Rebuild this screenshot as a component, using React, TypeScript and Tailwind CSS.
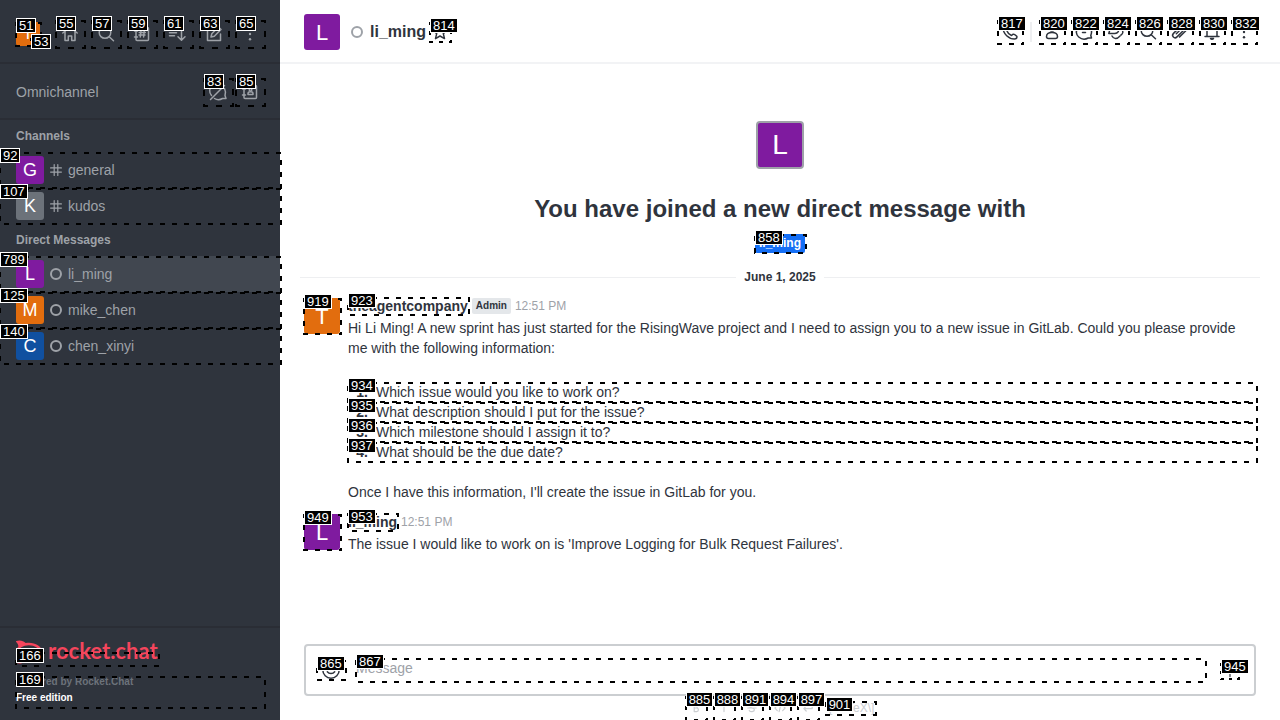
import type { ReactNode } from "react";
import { SiRocketdotchat } from "react-icons/si";

/* Numbered dashed outline laid over an interactive element. */
function Mark({ id, units }: { id: number; units?: number }) {
  return (
    <span aria-hidden="true" className="pointer-events-none absolute -right-px bottom-0 left-0 top-0 z-10">
      <span className="absolute inset-x-0 bottom-0 top-px">
        <svg className="absolute h-full w-full overflow-visible">
          <rect
            width="100%"
            height="100%"
            fill="none"
            stroke="#000"
            strokeWidth="2"
            strokeDasharray="5 7"
            strokeDashoffset={units ? 2.5 : 0}
            pathLength={units}
            shapeRendering="crispEdges"
          />
        </svg>
      </span>
      <span className="absolute -top-1 left-0 h-[15px] border border-white bg-black px-[2px] text-[13px] font-normal leading-[13px] text-white">
        {id}
      </span>
    </span>
  );
}

const shapes: Record<string, ReactNode> = {
  home: <path d="M2.8 9 10 3l7.2 6M5 7.5v9h3.3V12h3.4v4.5H15v-9" />,
  search: <><circle cx="9" cy="8.5" r="5.8" /><path d="m13.2 12.8 4.3 4" /></>,
  directory: <><rect x="4" y="3.5" width="12.5" height="13" rx="1" /><path d="M2.5 7h3M2.5 13h3M9 6.5 8.3 13M12.3 6.5l-.7 6.5M7.3 8.5h6M7 11h6" /></>,
  sort: <path d="M1.5 5.5h9M1.5 8.7h7M1.5 11.7h5M13.5 4v12M10 12.7l3.5 3.5 3.5-3.5" />,
  edit: <path d="M10 3.5H3.5v13h13V10M7 13l.8-3.2L14.5 3 17 5.5l-6.7 6.7L7 13Z" />,
  kebab: <g fill="currentColor" stroke="none"><circle cx="10" cy="4.8" r="1.2" /><circle cx="10" cy="10" r="1.2" /><circle cx="10" cy="15.2" r="1.2" /></g>,
  chatOff: <path d="M3.5 13.5A7 7 0 0 1 14 4M16.5 6.5c1.5 3 .8 6 .5 7l1 3h-3.5c-3 1.8-6.200 1.200-8 0M2.500 17.500l14-14" />,
  contacts: <><rect x="4" y="3.500" width="12.500" height="13" rx="1" /><path d="M2.500 7h3M2.500 13h3M8 12.500h5v-1c0-1-1-1.700-2.500-1.700S8 10.500 8 11.500Z" /><circle cx="10.500" cy="7.700" r="1.300" /></>,
  phone: <path d="M3 5.500C3 12 9 17 14.500 17c1.500 0 2.500-1 2.500-2.200 0-.8-3-3-3.800-2.600l-1.700 1.300C9.500 12.700 7.500 10.500 7 9l1.200-1.700C8.600 6.300 7 3.300 6 3.200 4.500 3 3 4.200 3 5.500Z" />,
  user: <><circle cx="10" cy="6" r="3" /><path d="M4.500 14.500c0-3 2-4 5.500-4s5.500 1 5.500 4c0 1.500-.5 2-2 2h-7c-1.500 0-2-.5-2-2Z" /></>,
  thread: <path d="M16.800 13.500c1.400-3.500.7-6.300-1-8.200C12.500 2 7 2.200 4 5.500c-2.600 3-2 7.200.7 9.500 3 2.600 7 2.400 9.500 1h3.300l-.7-2.500ZM7 7.500h6M8.500 10.500h3" />,
  discussion: <path d="M7.500 11.500H2.800L3.500 9C2 5.500 4.500 3 7.800 3s5.500 2.500 5 5.200c-.5 2.300-2.700 3.600-5.300 3.300ZM15.500 7.500c2 1.500 1.800 4-.5 5.500M6 14c1.500 3 5 3.500 8 0" />,
  clip: <path d="m6.300 11.800 6-6c1.300-1.300 3.200.6 1.900 1.900l-7.200 7.200c-2.500 2.500-6-1-3.500-3.500l7.300-7.300c3.800-3.500 8.300 1.200 4.800 4.800L9.500 15" />,
  bell: <path d="M3 14.500h14M5 14.500V8.500c0-6.500 10-6.500 10 0v6M8.500 16.500c.5 1 2.500 1 3 0Z" />,
  star: <path d="m10 3 2.100 4.700 5 .5-3.800 3.400 1.200 5L10 14l-4.500 2.600 1.200-5L2.900 8.200l5-.5L10 3Z" />,
  smile: <><circle cx="10" cy="10" r="8.200" /><path d="M6.300 11.800c1.800 2.400 5.600 2.400 7.400 0M7.300 7v1.200M12.700 7v1.200" /></>,
  plus: <path d="M10 3v14M3 10h14" />,
  hash: <path d="M7 1v18M13 1v18M1 6.500h18M1 13.500h18" />,
  bold: <path d="M7 4v12h4c4 0 4-6 0-6H7h3c3.500 0 3.500-6 0-6H7Z" />,
  italic: <path d="M10 4v12M8 4h4" />,
  strike: <path d="M14 6c-1-3-8-2.500-8 1s8 2.500 8 6-7 4-8.500 1M3 10h14" />,
  code: <path d="m5.500 5.500-4 4.500 4 4.500M14.500 5.500l4 4.500-4 4.500M11.500 4l-3 12" />,
  enter: <path d="M17 4v7H3M7 7l-4 4 4 4" />,
};

function Icon({ name, className = "size-5", width = 1.5 }: { name: string; className?: string; width?: number }) {
  return (
    <svg aria-hidden="true" viewBox="0 0 20 20" className={`shrink-0 ${className}`} fill="none" stroke="currentColor" strokeWidth={width} strokeLinejoin="round" strokeLinecap="round">
      {shapes[name]}
    </svg>
  );
}

function IconButton({ id, name, label, size = "size-7" }: { id: number; name: string; label: string; size?: string }) {
  return (
    <button type="button" aria-label={label} className={`relative flex shrink-0 items-center justify-center ${size}`}>
      <Icon name={name} />
      <Mark id={id} units={96} />
    </button>
  );
}

function Row({ id, letter, color, icon, name, active }: { id: number; letter: string; color: string; icon: "hash" | "status"; name: string; active?: boolean }) {
  return (
    <a href={`#${name}`} className={`relative flex h-9 items-center px-4 text-sm ${active ? "bg-[#414750]" : ""}`}>
      <span className={`flex size-7 items-center justify-center rounded-[3px] text-lg text-white ${color}`}>{letter}</span>
      <span className="mx-[6px] flex size-3 items-center justify-center">
        {icon === "hash" ? <Icon name="hash" className="size-3" width={2} /> : <span className="size-3 rounded-full border-2 border-[#9ea2a8]" />}
      </span>
      {name}
      <Mark id={id} />
    </a>
  );
}

function Message({ avatarId, nameId, letter, color, name, badge, children }: { avatarId: number; nameId: number; letter: string; color: string; name: string; badge?: string; children: ReactNode }) {
  return (
    <article className="flex gap-2 px-6 pb-[2px] pt-2">
      <button type="button" aria-label={`${name} profile`} className={`relative mt-[2px] flex size-9 shrink-0 items-center justify-center rounded-[3px] text-[22px] text-white ${color}`}>
        {letter}
        <Mark id={avatarId} units={144} />
      </button>
      <div className="min-w-0 flex-1">
        <header className="flex h-5 items-center gap-1">
          <button type="button" className="relative text-sm font-bold leading-[18px]">
            {name}
            <Mark id={nameId} />
          </button>
          {badge && <span className="rounded-[2px] bg-[#e4e7ea] px-1 text-[10px] font-bold leading-4">{badge}</span>}
          <time className="text-xs text-[#9ea2a8]">12:51 PM</time>
        </header>
        <div className="mt-[2px] text-sm leading-5">{children}</div>
      </div>
    </article>
  );
}

const questions = [
  { id: 934, text: "Which issue would you like to work on?" },
  { id: 935, text: "What description should I put for the issue?" },
  { id: 936, text: "Which milestone should I assign it to?" },
  { id: 937, text: "What should be the due date?" },
];

const navigation = [
  { id: 55, name: "home", label: "Home" },
  { id: 57, name: "search", label: "Search" },
  { id: 59, name: "directory", label: "Directory" },
  { id: 61, name: "sort", label: "Display" },
  { id: 63, name: "edit", label: "Create new" },
  { id: 65, name: "kebab", label: "More" },
];

const roomTools = [
  { id: 820, name: "user", label: "User info" },
  { id: 822, name: "thread", label: "Threads" },
  { id: 824, name: "discussion", label: "Discussion" },
  { id: 826, name: "search", label: "Search messages" },
  { id: 828, name: "clip", label: "Files" },
  { id: 830, name: "bell", label: "Notifications" },
  { id: 832, name: "kebab", label: "Options" },
];

const formats = [
  { id: 885, name: "bold", label: "Bold" },
  { id: 888, name: "italic", label: "Italic" },
  { id: 891, name: "strike", label: "Strike" },
  { id: 894, name: "code", label: "Inline code" },
  { id: 897, name: "enter", label: "Multiline" },
];

export default function App() {
  return (
    <div className="flex h-screen overflow-hidden bg-white font-['Liberation_Sans',Arial,sans-serif] text-[#2f343d]">
      <aside className="relative z-10 flex w-[280px] shrink-0 flex-col bg-[#2f343d] text-[#9ea2a8]">
        <div className="flex h-16 items-center justify-between border-b-2 border-[#2a2d35] px-4 pt-[6px]">
          <button type="button" aria-label="Account" className="relative flex size-6 items-center justify-center rounded-[3px] bg-[#e26d0e] text-base text-white">
            T
            <Mark id={51} units={96} />
            <span className="absolute bottom-0 right-px size-2 rounded-full">
              <Mark id={53} units={48} />
            </span>
          </button>
          <nav className="flex gap-2">
            {navigation.map((item) => <IconButton key={item.id} {...item} />)}
          </nav>
        </div>
        <div className="flex h-14 items-center border-b-2 border-[#2a2d35] px-4 pt-[2px]">
          <span className="flex-1 text-sm">Omnichannel</span>
          <div className="flex gap-1">
            <IconButton id={83} name="chatOff" label="Turn on answer chats" />
            <IconButton id={85} name="contacts" label="Contact center" />
          </div>
        </div>
        <nav className="flex-1">
          <h2 className="px-4 text-xs font-bold leading-8">Channels</h2>
          <Row id={92} letter="G" color="bg-[#7f1b9f]" icon="hash" name="general" />
          <Row id={107} letter="K" color="bg-[#6c727a]" icon="hash" name="kudos" />
          <h2 className="px-4 text-xs font-bold leading-8">Direct Messages</h2>
          <Row id={789} letter="L" color="bg-[#7f1b9f]" icon="status" name="li_ming" active />
          <Row id={125} letter="M" color="bg-[#e26d0e]" icon="status" name="mike_chen" />
          <Row id={140} letter="C" color="bg-[#1050a0]" icon="status" name="chen_xinyi" />
        </nav>
        <footer className="border-t-2 border-[#2a2d35] px-4 py-3 font-bold">
          <div className="relative flex h-6 items-center">
            <a href="#home" className="flex items-center gap-[6px] font-[Lato,sans-serif] text-[22px] leading-6 text-[#f5455c]">
              <SiRocketdotchat aria-hidden="true" className="size-[26px]" />
              <span className="pb-[2px]">rocket.chat</span>
            </a>
            <span className="absolute left-0 top-3 h-[14px] w-[142px] font-['Liberation_Sans',Arial,sans-serif]">
              <Mark id={166} />
            </span>
          </div>
          <div className="relative mt-3 flex h-8 flex-col pb-1 text-[10px] leading-[16px]">
            <p className="-mt-[2px] text-[#6c727a]">Powered by Rocket.Chat</p>
            <p className="text-white">Free edition</p>
            <Mark id={169} />
          </div>
        </footer>
      </aside>

      <main className="flex min-w-0 flex-1 flex-col">
        <header className="flex h-16 shrink-0 items-center border-b-2 border-[#f2f3f5] px-6 pt-[2px]">
          <span className="flex size-9 items-center justify-center rounded-[3px] bg-[#7f1b9f] text-[22px] text-white">L</span>
          <span className="ml-[11px] mr-[7px] size-3 rounded-full border-2 border-[#9ea2a8]" />
          <h1 className="mr-1 text-base font-bold">li_ming</h1>
          <IconButton id={814} name="star" label="Favorite" size="size-5" />
          <div className="ml-auto flex items-center gap-2">
            <IconButton id={817} name="phone" label="Call" size="size-6" />
            <span className="h-5 w-[2px] bg-[#eeeff1]" />
            {roomTools.map((item) => <IconButton key={item.id} {...item} size="size-6" />)}
          </div>
        </header>

        <section className="min-h-0 flex-1 overflow-hidden">
          <div className="flex flex-col items-center pt-[57px]">
            <span className="flex size-12 items-center justify-center rounded-[4px] border-2 border-[#9ea2a8] bg-[#7f1b9f] text-[28px] text-white">L</span>
            <h2 className="mt-6 text-2xl font-bold leading-8">You have joined a new direct message with</h2>
            <a href="#li_ming" className="relative mt-[9px] rounded-[2px] bg-[#156ff5] px-1 text-xs font-bold leading-[19px] text-white">
              li_ming
              <Mark id={858} />
            </a>
          </div>
          <div className="mx-5 mt-4 flex items-center gap-2 text-xs font-bold">
            <span className="h-px flex-1 bg-[#eeeff1]" />
            <span>June 1, 2025</span>
            <span className="h-px flex-1 bg-[#eeeff1]" />
          </div>
          <div className="pt-[3px]">
            <Message avatarId={919} nameId={923} letter="T" color="bg-[#e26d0e]" name="theagentcompany" badge="Admin">
              <p>Hi Li Ming! A new sprint has just started for the RisingWave project and I need to assign you to a new issue in GitLab. Could you please provide me with the following information:</p>
              <ol className="mb-5 mt-6">
                {questions.map((question, index) => (
                  <li key={question.id} className="relative flex gap-2">
                    <span className="w-5 text-right font-bold">{index + 1}.</span>
                    {question.text}
                    <Mark id={question.id} />
                  </li>
                ))}
              </ol>
              <p>Once I have this information, I'll create the issue in GitLab for you.</p>
            </Message>
            <Message avatarId={949} nameId={953} letter="L" color="bg-[#7f1b9f]" name="li_ming">
              <p>The issue I would like to work on is 'Improve Logging for Bulk Request Failures'.</p>
            </Message>
          </div>
        </section>

        <footer className="shrink-0 px-6">
          <div className="flex h-[52px] items-center rounded-[4px] border-2 border-[#cbced1] px-[11px]">
            <button type="button" aria-label="Emoji" className="relative mr-[11px] flex h-5 w-7 items-center justify-center">
              <Icon name="smile" />
              <Mark id={865} />
            </button>
            <div className="relative mr-4 h-6 flex-1">
              <input aria-label="Message" placeholder="Message" className="block h-5 w-full bg-transparent text-sm outline-none placeholder:text-[#9ea2a8]" />
              <Mark id={867} />
            </div>
            <button type="button" aria-label="Add" className="relative mr-[5px] mt-[2px] flex h-4 w-[17px] items-center justify-center">
              <Icon name="plus" className="size-4" />
              <Mark id={945} units={96} />
            </button>
          </div>
          <div className="flex h-6 items-center justify-center gap-2 text-[#cbced1]">
            {formats.map((item) => (
              <button key={item.id} type="button" aria-label={item.label} className="relative flex h-6 w-5 items-center justify-center">
                <Icon name={item.name} className="size-3" width={2} />
                <Mark id={item.id} units={96} />
              </button>
            ))}
            <a href="#katex" className="relative text-xs leading-[14px]">
              \[KaTeX\]
              <Mark id={901} />
            </a>
          </div>
        </footer>
      </main>
    </div>
  );
}
